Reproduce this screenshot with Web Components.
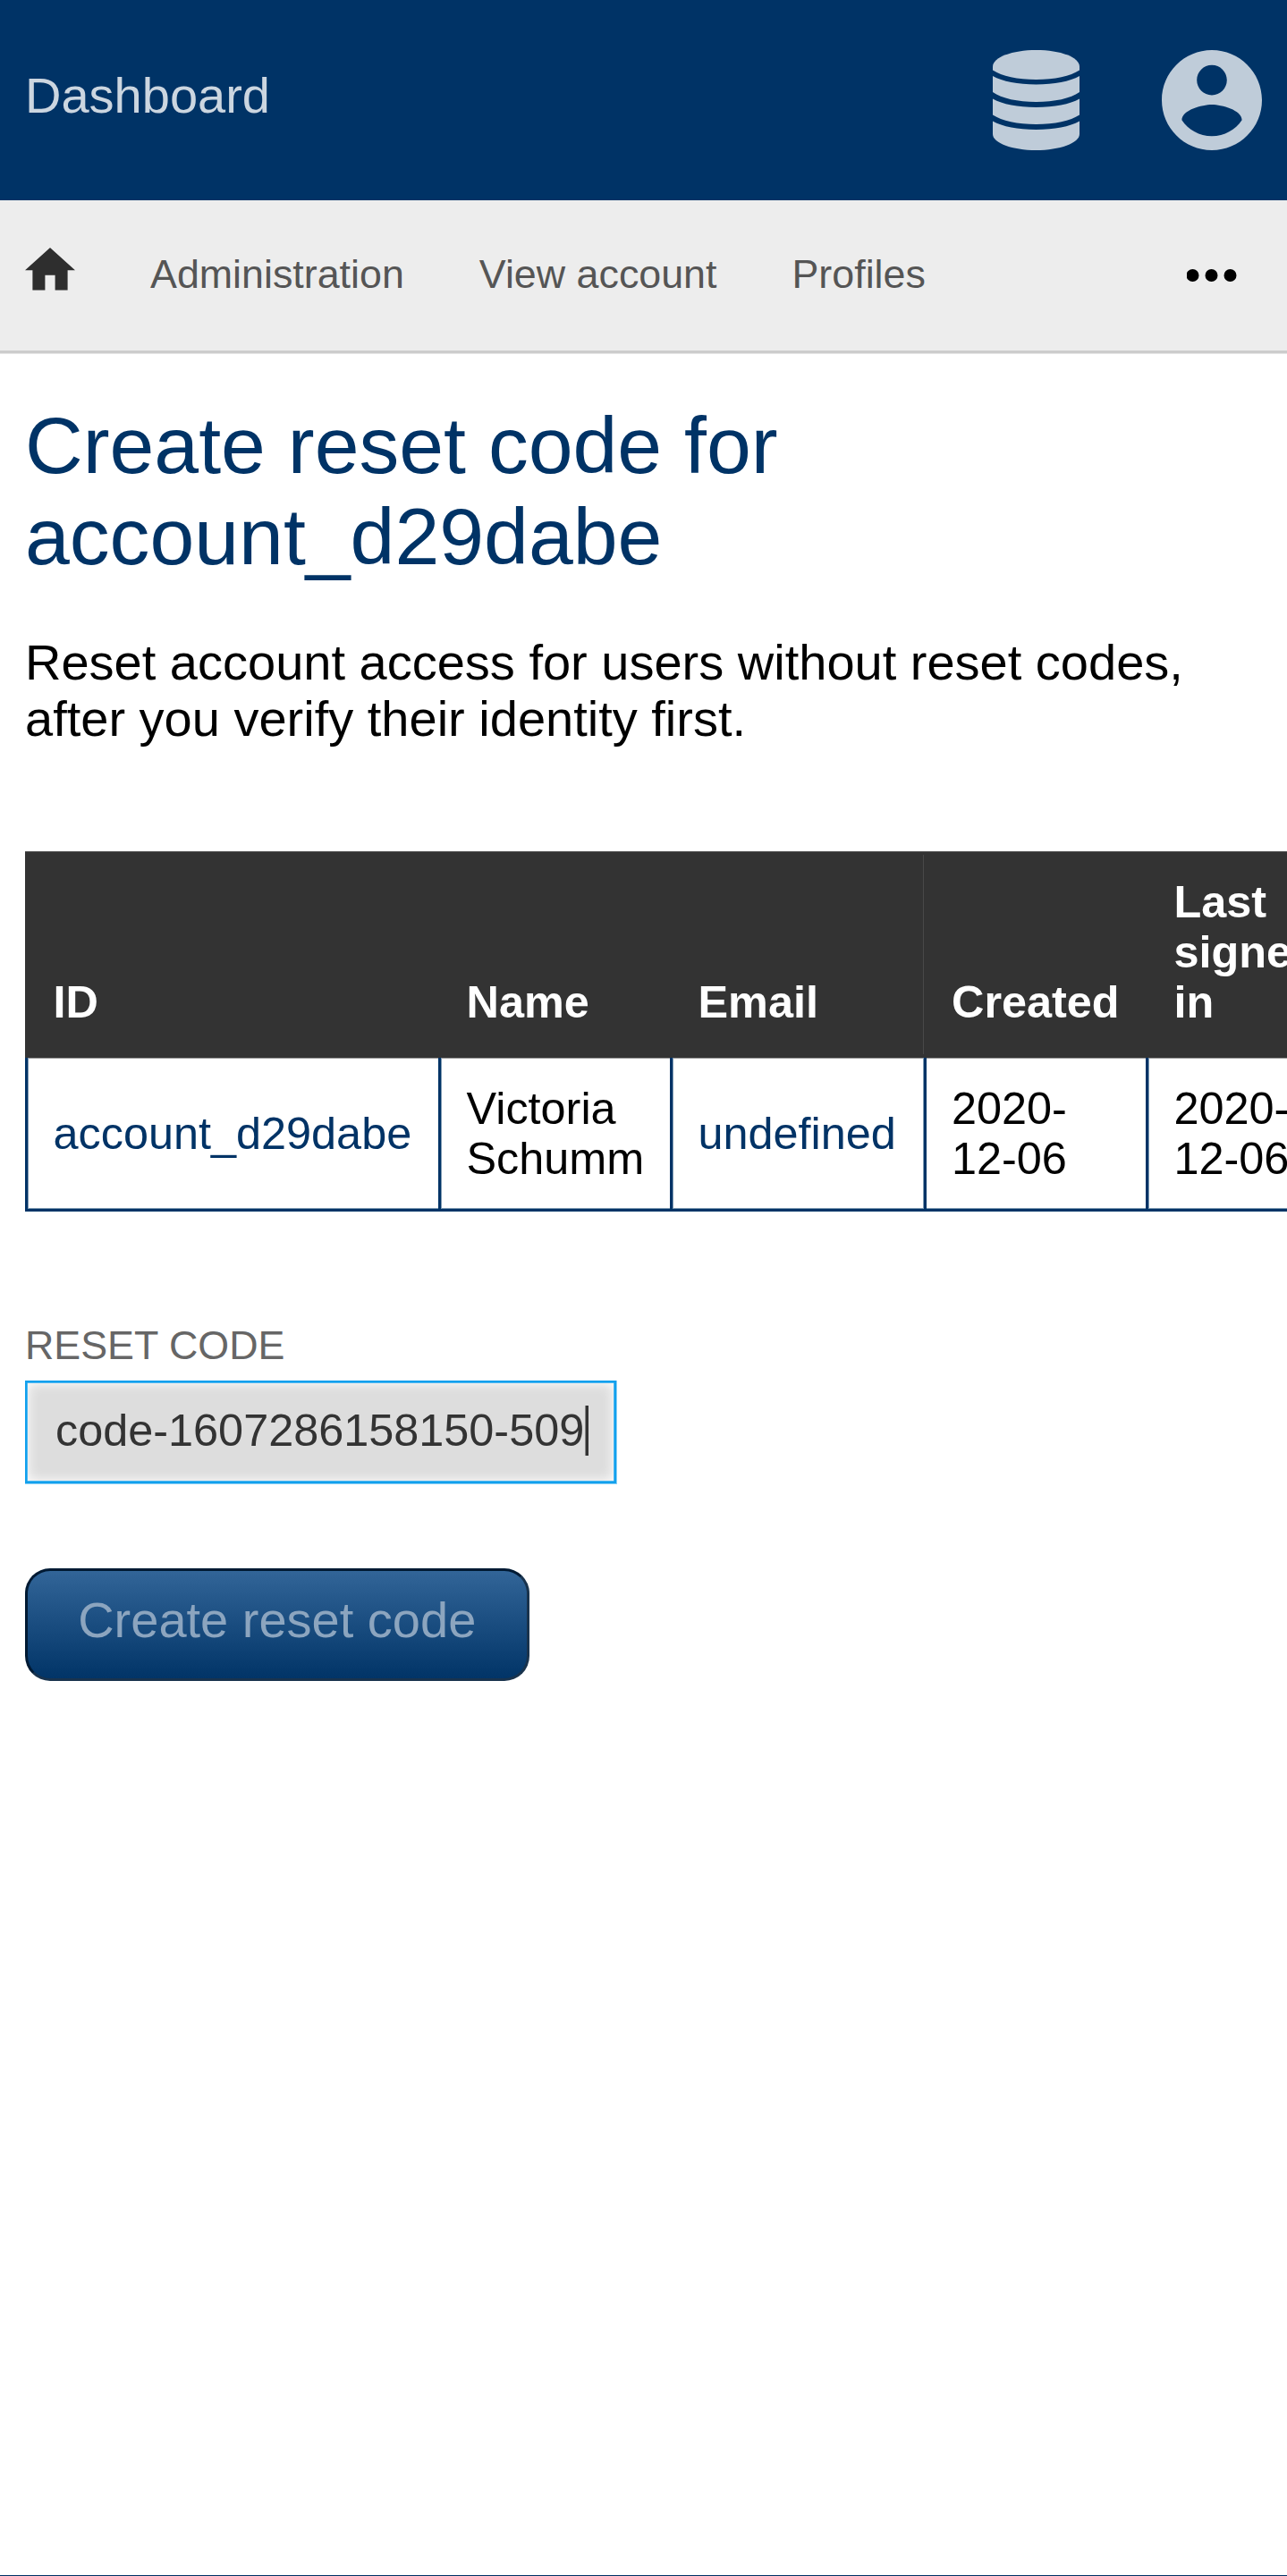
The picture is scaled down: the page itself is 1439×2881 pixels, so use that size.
<!DOCTYPE html>
<html lang="en">
<head>
<meta charset="utf-8">
<title>Create reset code</title>
<style>
html,body{margin:0;background:#fff}
body{font-family:"Liberation Sans",Arial,sans-serif;font-size:56px;color:#000;width:1439px;height:2881px;overflow:hidden}
</style>
</head>
<body>
<reset-page></reset-page>
<script>
const define=(name,css,html)=>customElements.define(name,class extends HTMLElement{
  constructor(){
    super();
    const t=document.createElement('template');
    t.innerHTML='<style>*{box-sizing:border-box}'+css+'</style>'+html;
    this.attachShadow({mode:'open'}).append(t.content.cloneNode(true));
  }
});

define('app-header',`
:host{display:flex;align-items:center;height:224px;padding:0 28px;background:#036;box-sizing:border-box}
.title{flex:1;color:#ccd6e0;font-size:56px;line-height:64px;margin-top:-10px}
svg{display:block;fill:#bfccd9}
.db{width:98px;height:112px;margin-right:91px}
.user{width:112px;height:112px}
`,`<span class="title"><slot></slot></span>
<svg class="db" viewBox="0 0 98 112"><path d="M48.500 0C76 0 97 8 97 18.500V22.500C87 29 69 33 48.500 33S10 29 0 22.500V18.500C0 8 22 0 48.500 0Z"/><path d="M0 29C11 35 28 38.500 48.500 38.500S86 35 97 29V47C87 54 69 58 48.500 58S10 54 0 47Z"/><path d="M0 54.500C11 60.500 28 64 48.500 64S86 60.500 97 54.500V72.500C87 79 69 83 48.500 83S10 79 0 72.500Z"/><path d="M0 79.500C11 85.500 28 89 48.500 89S86 85.500 97 79.500V94C97 104 75 112 48.500 112S0 104 0 94Z"/></svg>
<svg class="user" viewBox="2 2 20 20"><path d="M12 2C6.480 2 2 6.480 2 12s4.480 10 10 10 10-4.480 10-10S17.520 2 12 2zm0 3c1.660 0 3 1.340 3 3s-1.340 3-3 3-3-1.340-3-3 1.340-3 3-3zm0 14.200c-2.500 0-4.710-1.280-6-3.220.030-1.990 4-3.080 6-3.080 1.990 0 5.970 1.090 6 3.080-1.290 1.940-3.500 3.220-6 3.220z"/></svg>`);

define('nav-bar',`
:host{display:flex;align-items:center;gap:84px;height:172px;padding:0 56px 4px 28px;background:linear-gradient(#ededed 168px,#ccc 168px 171px,#e6e6e6 171px);color:#555;font-size:44.8px;line-height:52px;box-sizing:border-box}
::slotted(span){margin-top:-4px}
svg{display:block;flex:none}
.home{width:56px;height:48px;fill:#2e2e2e;margin-top:-14px}
.more{width:56px;height:14px;margin-left:auto}
`,`<svg class="home" viewBox="2 3 20 17.143"><path d="M10 20v-6h4v6h5v-8h3L12 3 2 12h3v8z"/></svg>
<slot></slot>
<svg class="more" viewBox="0 0 56 14"><circle cx="6.500" cy="7" r="7"/><circle cx="27.500" cy="7" r="7"/><circle cx="48.500" cy="7" r="7"/></svg>`);

define('page-intro',`
:host{display:block;padding:51px 28px 0}
h1{margin:0;font-weight:400;font-size:89.6px;line-height:102px;color:#036}
p{margin:58px 0 0;font-size:56px;line-height:63px}
`,`<h1><slot name="title"></slot></h1><p><slot></slot></p>`);

define('account-table',`
:host{display:block;margin:117px 0 0 28px;overflow:hidden;font-size:50.4px;line-height:56px}
.row{display:grid;grid-template-columns:462px 259px 283px 249px 248px}
.row>div{display:flex;padding:0 26px 0 31.5px}
.row>div:nth-child(4){padding-left:32px}
.head{background:linear-gradient(#555 1px,#333 1px);color:#fff;font-weight:700;height:231px}
.head>div{align-items:flex-end;padding-bottom:34px}
.head>div:nth-child(4){background:linear-gradient(#484848,#484848) 0 4px/1px 223px no-repeat}
.body{height:172px;background:linear-gradient(#999 1px,transparent 1px 168px,#809ab3 168px 169px,#036 169px)}
.body>div{align-items:center;padding-bottom:2px;background:linear-gradient(90deg,#036 3px,#809ab3 3px 4px,transparent 4px) 0 0/100% 169px no-repeat}
.body>div:nth-child(4){background:linear-gradient(90deg,#809ab3 1px,#036 1px 4px,transparent 4px) 0 0/100% 169px no-repeat}
.link{color:#036}
`,`<div class="row head"><div>ID</div><div>Name</div><div>Email</div><div>Created</div><div>Last<br>signed<br>in</div></div>
<div class="row body"><div class="link">account_d29dabe</div><div>Victoria<br>Schumm</div><div class="link">undefined</div><div>2020-<br>12-06</div><div>2020-<br>12-06</div></div>`);

define('code-field',`
:host{display:block;margin:123px 0 0 28px}
label{display:block;color:#666;font-size:44.8px;line-height:52px;text-transform:uppercase}
.box{width:662px;height:116px;margin-top:14px;padding:3px 0 0 3px;color:#333;font-size:50.4px;line-height:56px;
 background:linear-gradient(#12a0ed,#12a0ed) 0 0/661px 115px no-repeat,#88cff6}
.inner{display:flex;align-items:center;width:655px;height:109px;padding:0 0 3px 31px;background:#ddd;box-shadow:inset 0 0 14px #fff,0 0 0 .5px #88cff6}
.caret{width:4px;height:56px;margin-left:1px;background:linear-gradient(90deg,#888 1px,#333 1px)}
`,`<label><slot name="label"></slot></label><div class="box"><div class="inner"><slot></slot><span class="caret"></span></div></div>`);

define('submit-button',`
:host{display:block;margin:94px 0 0 28px}
button{display:block;font:inherit;width:563.5px;height:126px;padding:0 0 11px;border:3px solid;border-color:#001a33 #19334d #19334d #001a33;border-radius:28px;color:#8ca5bf;background:linear-gradient(#369,#036) border-box;line-height:64px}
`,`<button type="button"><slot></slot></button>`);

define('reset-page',`
:host{display:flex;flex-direction:column;height:2881px;background:linear-gradient(#036,#036) 0 100%/100% 1px no-repeat}
`,`<app-header>Dashboard</app-header>
<nav-bar><span>Administration</span><span>View account</span><span>Profiles</span></nav-bar>
<page-intro><span slot="title">Create reset code for<br>account_d29dabe</span>Reset account access for users without reset codes,<br>after you verify their identity first.</page-intro>
<account-table></account-table>
<code-field><span slot="label">Reset code</span><span>code-1607286158150-509</span></code-field>
<submit-button>Create reset code</submit-button>`);
</script>
</body>
</html>
